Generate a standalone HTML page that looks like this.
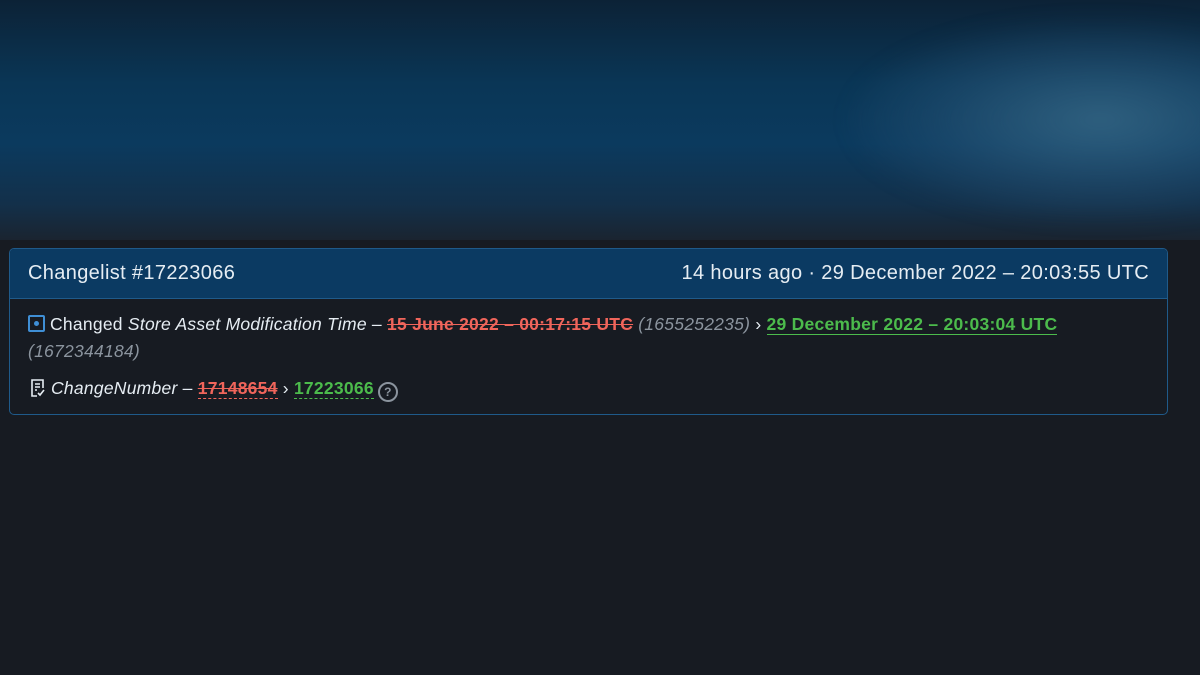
<!DOCTYPE html>
<html><head><meta charset="utf-8"><style>
html,body{margin:0;width:1200px;height:675px;overflow:hidden;background:#171b22;font-family:"Liberation Sans",sans-serif;}
.hero{position:absolute;left:0;top:0;width:1200px;height:240px;background:linear-gradient(180deg,#0c2236 0%,#0a3656 35%,#0b3a5e 60%,#13304a 85%,#1a2430 100%);overflow:hidden}
.blob{position:absolute;left:850px;top:20px;width:500px;height:200px;border-radius:50%;background:radial-gradient(ellipse at center,rgba(60,110,140,.75) 0%,rgba(45,90,125,.4) 45%,rgba(20,60,95,0) 75%);filter:blur(10px)}
.card{position:absolute;left:9px;top:248px;width:1157px;height:165px;border:1px solid #1f5a8a;border-radius:5px;background:#171b22;overflow:hidden}
.hd{height:49px;background:#0b3a62;border-bottom:1px solid #1f5a8a;color:#e6edf3;font-size:20px;letter-spacing:.35px;display:flex;justify-content:space-between;align-items:center;padding:0 18px}
.bd{padding:12px 18px;color:#e6edf3;font-size:17.5px;letter-spacing:.25px}
.l{line-height:27px}
i.g{color:#8b949e}
.del{color:#f0655b;font-weight:bold;text-decoration:line-through}
.add{color:#4cbb4c;font-weight:bold;border-bottom:1px solid #4cbb4c}
.dash{border-bottom:1px dashed currentColor;text-decoration-line:line-through}
.add2{color:#4cbb4c;font-weight:bold;border-bottom:1px dashed #4cbb4c}
.ic{display:inline-block;width:13px;height:13px;border:2px solid #3f8fd6;border-radius:2px;vertical-align:-2px;position:relative;margin-right:5px}
.ic:after{content:"";position:absolute;left:4px;top:4px;width:5px;height:5px;background:#3f8fd6;border-radius:50%}
.q{display:inline-block;width:16px;height:16px;border:2px solid #8b949e;border-radius:50%;color:#8b949e;font-size:12px;text-align:center;line-height:16px;font-weight:bold;vertical-align:-2px;margin-left:4px;letter-spacing:0}
</style></head><body>
<div class="hero"><div class="blob"></div></div>
<div class="card">
<div class="hd"><span>Changelist #17223066</span><span>14 hours ago · 29 December 2022 – 20:03:55 UTC</span></div>
<div class="bd">
<div class="l"><span class="ic"></span>Changed <i>Store Asset Modification Time</i> – <span class="del">15 June 2022 – 00:17:15 UTC</span> <i class="g">(1655252235)</i> › <span class="add">29 December 2022 – 20:03:04 UTC</span><br><i class="g">(1672344184)</i></div>
<div class="l" style="margin-top:10px"><svg width="20" height="20" viewBox="0 0 20 20" style="vertical-align:-4px;margin-right:3px" fill="none" stroke="#e6edf3" stroke-width="1.6"><path d="M9 18H4V2h11v8M7 6h5M7 9h5M7 12h2M10 15l2 2 4-5"/></svg><i>ChangeNumber</i> – <span class="del dash">17148654</span> › <span class="add2">17223066</span><span class="q">?</span></div>
</div></div>
</body></html>
